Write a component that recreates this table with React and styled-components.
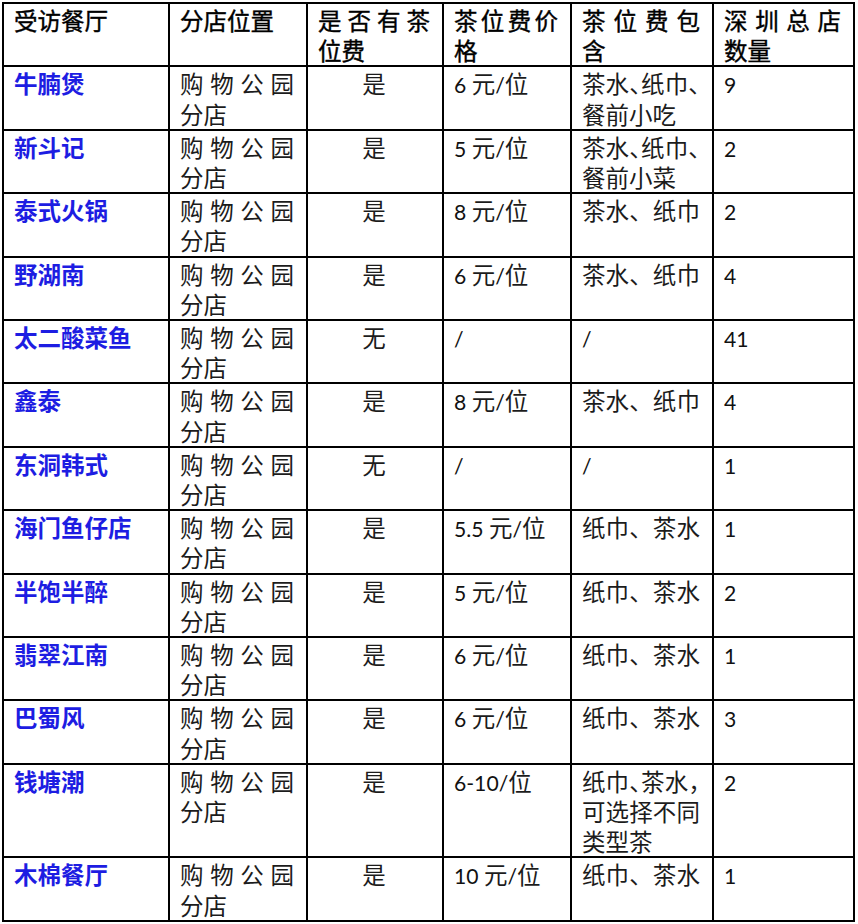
import React from 'react';
import styled, { createGlobalStyle } from 'styled-components';

const GlobalStyle = createGlobalStyle`
    html, body {
        margin: 0;
        padding: 0;
        background: #ffffff;
    }
    body {
        font-family: "Noto Sans CJK SC", "Noto Sans", sans-serif;
        color: #1c1c1c;
    }
`;

const Page = styled.div`
    padding: 2px 0 0 2px;
`;

const Table = styled.table`
    width: 853px;
    table-layout: fixed;
    border-collapse: collapse;
`;

const HeadCell = styled.th`
    border: 2px solid #000;
    padding: 1px 12px 0 10px;
    vertical-align: top;
    text-align: left;
    font-size: 23.5px;
    line-height: 30.2px;
    font-weight: 400;
    color: #000;
    -webkit-text-stroke: 0.4px #000;
`;

const Cell = styled.td`
    border: 2px solid #000;
    padding: 1px 12px 0 10px;
    vertical-align: top;
    text-align: ${(p) => (p.$center ? 'center' : 'left')};
    font-size: 23.5px;
    line-height: 30.2px;
    font-weight: ${(p) => (p.$name ? 700 : 400)};
    color: ${(p) => (p.$name ? '#1d1de2' : '#1c1c1c')};
`;

const Line = styled.div`
    white-space: nowrap;
    ${(p) =>
        p.$spread &&
        `
        text-align: justify;
        text-align-last: justify;
        text-justify: inter-character;
    `}
    ${(p) => p.$tight && 'font-feature-settings: "halt" 1;'}
`;

const Latin = styled.span`
    font-family: "Lato", "Liberation Sans", sans-serif;
    font-size: 0.9em;
    color: #111;
`;

// latin runs (digits, slash) get the narrower latin face
const mix = (text) =>
    text.split(/([\x00-\x7f]+)/).map((part, i) =>
        /^[\x00-\x7f]+$/.test(part) ? <Latin key={i}>{part}</Latin> : part
    );

const L = (t, opts = {}) => ({ t, ...opts });

const headers = [
    [L('受访餐厅')],
    [L('分店位置')],
    [L('是否有茶', { spread: true }), L('位费')],
    [L('茶位费价', { spread: true }), L('格')],
    [L('茶位费包', { spread: true }), L('含')],
    [L('深圳总店', { spread: true }), L('数量')],
];

const both = [L('茶水、纸巾', { spread: true })];
const rev = [L('纸巾、茶水', { spread: true })];
const none = [L('/')];

const rows = [
    { name: '牛腩煲', fee: '是', price: '6 元/位', incl: [L('茶水、纸巾、', { spread: true, tight: true }), L('餐前小吃')], count: '9' },
    { name: '新斗记', fee: '是', price: '5 元/位', incl: [L('茶水、纸巾、', { spread: true, tight: true }), L('餐前小菜')], count: '2' },
    { name: '泰式火锅', fee: '是', price: '8 元/位', incl: both, count: '2' },
    { name: '野湖南', fee: '是', price: '6 元/位', incl: both, count: '4' },
    { name: '太二酸菜鱼', fee: '无', price: '/', incl: none, count: '41' },
    { name: '鑫泰', fee: '是', price: '8 元/位', incl: both, count: '4' },
    { name: '东洞韩式', fee: '无', price: '/', incl: none, count: '1' },
    { name: '海门鱼仔店', fee: '是', price: '5.5 元/位', incl: rev, count: '1' },
    { name: '半饱半醉', fee: '是', price: '5 元/位', incl: rev, count: '2' },
    { name: '翡翠江南', fee: '是', price: '6 元/位', incl: rev, count: '1' },
    { name: '巴蜀风', fee: '是', price: '6 元/位', incl: rev, count: '3' },
    {
        name: '钱塘潮',
        fee: '是',
        price: '6-10/位',
        incl: [L('纸巾、茶水，', { spread: true, tight: true }), L('可选择不同', { spread: true }), L('类型茶')],
        count: '2',
    },
    { name: '木棉餐厅', fee: '是', price: '10 元/位', incl: rev, count: '1' },
];

const colWidths = [166, 138, 136, 128, 142, 141];

const Lines = ({ lines }) =>
    lines.map((l, i) => (
        <Line key={i} $spread={l.spread} $tight={l.tight}>
            {mix(l.t)}
        </Line>
    ));

const App = () => {
    return (
        <>
            <GlobalStyle />
            <Page>
                <Table>
                    <colgroup>
                        {colWidths.map((w, i) => (
                            <col key={i} style={{ width: w }} />
                        ))}
                    </colgroup>
                    <thead>
                        <tr>
                            {headers.map((h, i) => (
                                <HeadCell key={i}>
                                    <Lines lines={h} />
                                </HeadCell>
                            ))}
                        </tr>
                    </thead>
                    <tbody>
                        {rows.map((r) => (
                            <tr key={r.name}>
                                <Cell $name>{r.name}</Cell>
                                <Cell>
                                    <Line $spread>购物公园</Line>
                                    <Line>分店</Line>
                                </Cell>
                                <Cell $center>{r.fee}</Cell>
                                <Cell>{mix(r.price)}</Cell>
                                <Cell>
                                    <Lines lines={r.incl} />
                                </Cell>
                                <Cell>{mix(r.count)}</Cell>
                            </tr>
                        ))}
                    </tbody>
                </Table>
            </Page>
        </>
    );
};

export default App;
